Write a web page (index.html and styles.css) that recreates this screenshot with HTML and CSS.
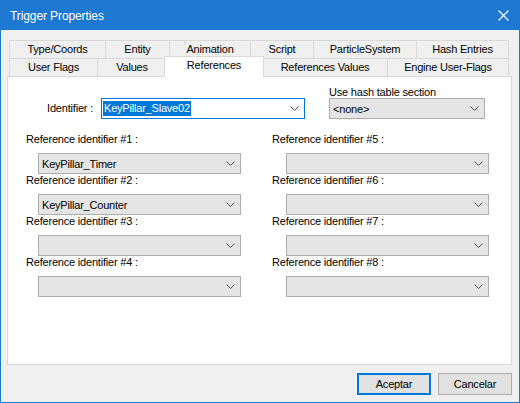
FILE: index.html
```html
<!DOCTYPE html>
<html lang="es">
<head>
  <meta charset="UTF-8" />
  <title>Trigger Properties</title>
  <link rel="stylesheet" href="styles.css">
</head>
<body>

  <div class="window">
    <div class="titlebar">
      <span class="title">Trigger Properties</span>
      <svg class="close" width="11" height="11" viewBox="0 0 11 11">
        <path d="M0.5 0.5 L10.5 10.5 M10.5 0.5 L0.5 10.5" stroke="#fff" stroke-width="1.1" fill="none"/>
      </svg>
    </div>

    <div class="tabs">
      <div class="tab-row back">
        <div class="tab">Type/Coords</div>
        <div class="tab">Entity</div>
        <div class="tab">Animation</div>
        <div class="tab">Script</div>
        <div class="tab">ParticleSystem</div>
        <div class="tab">Hash Entries</div>
      </div>
      <div class="tab-row front">
        <div class="tab">User Flags</div>
        <div class="tab">Values</div>
        <div class="tab active">References</div>
        <div class="tab">References Values</div>
        <div class="tab">Engine User-Flags</div>
      </div>
    </div>

    <div class="panel">
      <div class="top-row">
        <span class="ident-label">Identifier :</span>
        <div class="combo edit">
          <span class="sel">KeyPillar_Slave02</span>
          <svg class="chev" width="9" height="5" viewBox="0 0 9 5"><path d="M0.5 0.5 L4.5 4.5 L8.5 0.5"/></svg>
        </div>
        <div class="hash">
          <div class="hash-label">Use hash table section</div>
          <div class="combo hash-combo">
            <span>&lt;none&gt;</span>
            <svg class="chev" width="9" height="5" viewBox="0 0 9 5"><path d="M0.5 0.5 L4.5 4.5 L8.5 0.5"/></svg>
          </div>
        </div>
      </div>

      <div class="refs">
        <div class="ref left">
          <div class="ref-label">Reference identifier #1 :</div>
          <div class="combo ref-combo"><span>KeyPillar_Timer</span><svg class="chev" width="9" height="5" viewBox="0 0 9 5"><path d="M0.5 0.5 L4.5 4.5 L8.5 0.5"/></svg></div>
        </div>
        <div class="ref left">
          <div class="ref-label">Reference identifier #2 :</div>
          <div class="combo ref-combo"><span>KeyPillar_Counter</span><svg class="chev" width="9" height="5" viewBox="0 0 9 5"><path d="M0.5 0.5 L4.5 4.5 L8.5 0.5"/></svg></div>
        </div>
        <div class="ref left">
          <div class="ref-label">Reference identifier #3 :</div>
          <div class="combo ref-combo"><span></span><svg class="chev" width="9" height="5" viewBox="0 0 9 5"><path d="M0.5 0.5 L4.5 4.5 L8.5 0.5"/></svg></div>
        </div>
        <div class="ref left">
          <div class="ref-label">Reference identifier #4 :</div>
          <div class="combo ref-combo"><span></span><svg class="chev" width="9" height="5" viewBox="0 0 9 5"><path d="M0.5 0.5 L4.5 4.5 L8.5 0.5"/></svg></div>
        </div>
        <div class="ref right">
          <div class="ref-label">Reference identifier #5 :</div>
          <div class="combo ref-combo"><span></span><svg class="chev" width="9" height="5" viewBox="0 0 9 5"><path d="M0.5 0.5 L4.5 4.5 L8.5 0.5"/></svg></div>
        </div>
        <div class="ref right">
          <div class="ref-label">Reference identifier #6 :</div>
          <div class="combo ref-combo"><span></span><svg class="chev" width="9" height="5" viewBox="0 0 9 5"><path d="M0.5 0.5 L4.5 4.5 L8.5 0.5"/></svg></div>
        </div>
        <div class="ref right">
          <div class="ref-label">Reference identifier #7 :</div>
          <div class="combo ref-combo"><span></span><svg class="chev" width="9" height="5" viewBox="0 0 9 5"><path d="M0.5 0.5 L4.5 4.5 L8.5 0.5"/></svg></div>
        </div>
        <div class="ref right">
          <div class="ref-label">Reference identifier #8 :</div>
          <div class="combo ref-combo"><span></span><svg class="chev" width="9" height="5" viewBox="0 0 9 5"><path d="M0.5 0.5 L4.5 4.5 L8.5 0.5"/></svg></div>
        </div>
      </div>
    </div>

    <div class="buttons">
      <button class="btn default">Aceptar</button>
      <button class="btn">Cancelar</button>
    </div>
  </div>

</body>
</html>
```

FILE: styles.css
```css
* {
  box-sizing: border-box;
}

body {
  margin: 0;
  font-family: 'Liberation Sans', Arial, sans-serif;
  font-size: 11px;
  letter-spacing: -0.2px;
  color: #000;
}

.window {
  width: 520px;
  height: 403px;
  border: 1px solid #1c78d0;
  background: #f0f0f0;
  display: flex;
  flex-direction: column;
}

.titlebar {
  height: 29px;
  flex: none;
  background: #1c78d0;
  color: #fff;
  display: flex;
  align-items: center;
  justify-content: space-between;
  padding: 0 10px 0 9px;
  font-size: 12px;
  letter-spacing: -0.1px;
}

.close {
  display: block;
}

/* Onglets sur deux rangées */
.tabs {
  margin: 10px 0 0 8px;
  width: 500px;
}

.tab-row {
  display: grid;
  height: 18px;
}

.back {
  grid-template-columns: 96px 64px 81px 63px 103px 93px;
}

.front {
  grid-template-columns: 88px 69px 96px 125px 122px;
}

.tab {
  border-top: 1px solid #d9d9d9;
  border-left: 1px solid #d9d9d9;
  text-align: center;
  line-height: 17px;
  white-space: nowrap;
}

.tab:last-child {
  border-right: 1px solid #d9d9d9;
}

.tab.active {
  background: #fff;
  margin: -2px -2px -1px;
  border-right: 1px solid #d9d9d9;
  position: relative;
  z-index: 1;
}

.panel {
  margin: 0 7px 0 6px;
  height: 289px;
  border: 1px solid #d9d9d9;
  background: #fff;
  padding: 9px 0 0 18px;
}

.top-row {
  display: flex;
  align-items: flex-end;
}

.ident-label {
  width: 67px;
  margin-right: 8px;
  text-align: right;
  line-height: 21px;
}

.combo {
  height: 21px;
  border: 1px solid #adadad;
  background: #e5e5e5;
  display: flex;
  align-items: center;
  justify-content: space-between;
  padding: 0 5px 0 3px;
}

.combo.edit {
  width: 204px;
  background: #fff;
  border-color: #0078d7;
  padding-left: 1px;
}

.sel {
  background: #0078d7;
  color: #fff;
  line-height: 15px;
  padding: 0 1px;
}

.hash {
  margin-left: 24px;
}

.hash-label {
  line-height: 12px;
}

.hash-combo {
  width: 156px;
}

.chev {
  display: block;
  flex: none;
}

.chev path {
  fill: none;
  stroke: #505050;
  stroke-width: 1;
}

.refs {
  margin-top: 14px;
  display: grid;
  grid-template-columns: 246px 1fr;
  grid-template-rows: repeat(4, 41px);
  grid-auto-flow: column;
}

.ref-label {
  line-height: 13px;
  margin-bottom: 7px;
}

.ref-combo {
  width: 203px;
}

.left .ref-combo {
  margin-left: 12px;
}

.right .ref-combo {
  margin-left: 14px;
}

.buttons {
  display: flex;
  justify-content: flex-end;
  gap: 7px;
  padding: 8px 7px 0 0;
}

.btn {
  width: 74px;
  height: 22px;
  border: 1px solid #adadad;
  background: #e1e1e1;
  font-family: inherit;
  font-size: 11px;
  letter-spacing: -0.2px;
  color: #000;
  padding: 0;
}

.btn.default {
  border: 2px solid #0078d7;
}
```
